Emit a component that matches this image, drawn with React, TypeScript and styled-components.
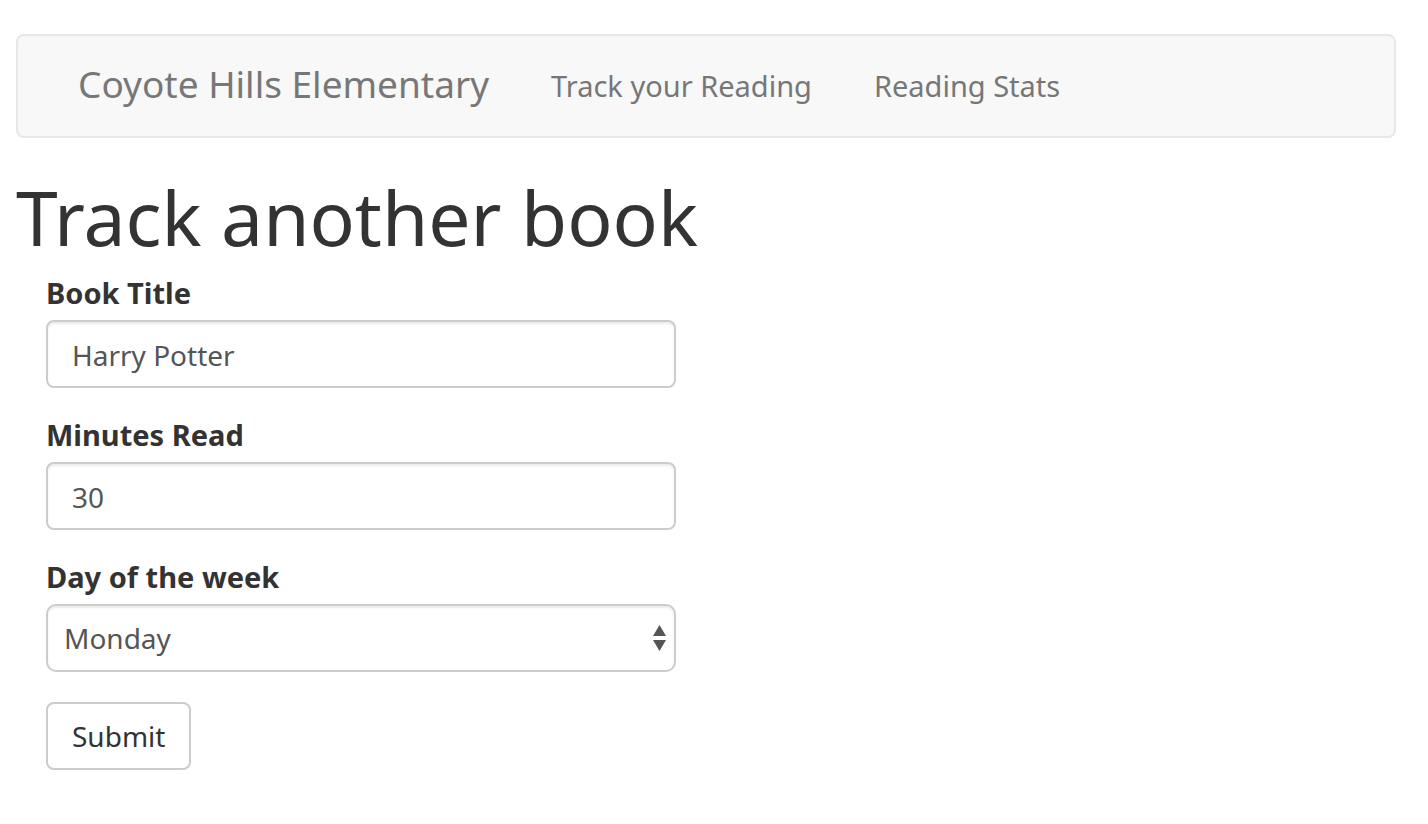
import React from "react";
import styled, { createGlobalStyle } from "styled-components";

const GlobalStyle = createGlobalStyle`
  *, *::before, *::after { box-sizing: border-box; }
  body {
    margin: 0;
    background: #fff;
    color: #333;
    font-family: "Lucida Grande", "Noto Sans", sans-serif;
    font-size: 28px;
    line-height: 40px;
  }
`;

const Page = styled.div`
  padding: 34px 32px 54px 16px;
`;

const Navbar = styled.nav`
  display: flex;
  flex-wrap: wrap;
  align-items: center;
  column-gap: 62px;
  min-height: 104px;
  padding: 0 60px;
  margin-bottom: 40px;
  background: #f8f8f8;
  border: 2px solid #e7e7e7;
  border-radius: 8px;
`;

const NavLink = styled.a<{ $brand?: boolean }>`
  padding-bottom: ${(p) => (p.$brand ? "4px" : "0")};
  color: #777;
  font-size: ${(p) => (p.$brand ? "37px" : "29px")};
  text-decoration: none;
`;

const Heading = styled.h1`
  margin: 0 0 20px;
  font-size: 75px;
  font-weight: 400;
  line-height: 78px;
`;

const Form = styled.form`
  width: 50%;
  padding: 0 30px;
`;

const Field = styled.div`
  margin-bottom: 30px;
`;

const Label = styled.label`
  display: block;
  padding-bottom: 10px;
  font-size: 29px;
  font-weight: 700;
  line-height: 34px;
`;

const Input = styled.input`
  display: block;
  width: 100%;
  height: 68px;
  padding: 2px 24px 0;
  color: #555;
  background: #fff;
  border: 2px solid #ccc;
  border-radius: 8px;
  box-shadow: inset 0 2px 2px rgba(0, 0, 0, 0.075);
  font: inherit;
`;

const SelectBox = styled.div`
  position: relative;
`;

const Select = styled(Input).attrs({ as: "select" })`
  appearance: none;
  padding: 0 48px 0 16px;
  border-radius: 10px;
`;

const Arrows = styled.svg`
  position: absolute;
  top: 21px;
  right: 10px;
  width: 13px;
  height: 26px;
  fill: #555;
  pointer-events: none;
`;

const Button = styled.button`
  display: block;
  height: 68px;
  padding: 0 24px;
  color: #333;
  background: #fff;
  border: 2px solid #ccc;
  border-radius: 8px;
  font: inherit;
`;

const days = ["Monday", "Tuesday", "Wednesday", "Thursday", "Friday", "Saturday", "Sunday"];

export default function App() {
  return (
    <Page>
      <GlobalStyle />
      <Navbar>
        <NavLink href="#" $brand>Coyote Hills Elementary</NavLink>
        <NavLink href="#track">Track your Reading</NavLink>
        <NavLink href="#stats">Reading Stats</NavLink>
      </Navbar>
      <main>
        <Heading>Track another book</Heading>
        <Form onSubmit={(e: React.FormEvent) => e.preventDefault()}>
          <Field>
            <Label htmlFor="title">Book Title</Label>
            <Input id="title" type="text" defaultValue="Harry Potter" />
          </Field>
          <Field>
            <Label htmlFor="minutes">Minutes Read</Label>
            <Input id="minutes" type="text" inputMode="numeric" defaultValue="30" />
          </Field>
          <Field>
            <Label htmlFor="day">Day of the week</Label>
            <SelectBox>
              <Select id="day" defaultValue="Monday">
                {days.map((day) => (
                  <option key={day}>{day}</option>
                ))}
              </Select>
              <Arrows viewBox="0 0 13 26" aria-hidden="true">
                <path d="M6.5 0 13 11H0zM0 15h13L6.500 26z" />
              </Arrows>
            </SelectBox>
          </Field>
          <Button type="submit">Submit</Button>
        </Form>
      </main>
    </Page>
  );
}
